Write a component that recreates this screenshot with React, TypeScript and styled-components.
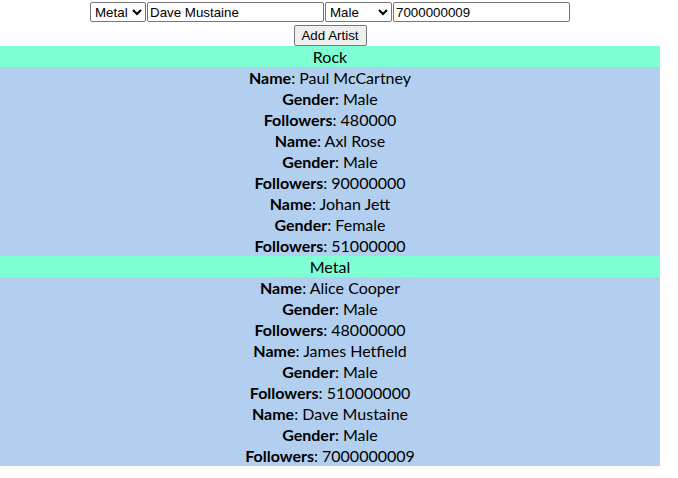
import React, { useState } from "react";
import styled, { createGlobalStyle } from "styled-components";

type Artist = {
  name: string;
  gender: string;
  followers: string;
  genre: string;
};

const GlobalStyle = createGlobalStyle`
  body {
    margin: 0;
    font-family: "Segoe UI", Lato, "Noto Sans", sans-serif;
    background: #ffffff;
  }
`;

const Page = styled.div`
  width: 660px;
  text-align: center;
  color: #000;
`;

const Form = styled.div`
  padding-top: 2px;
  display: flex;
  flex-direction: column;
  align-items: center;
  gap: 3px;
`;

const Controls = styled.div`
  display: flex;
  gap: 1px;
  justify-content: center;
`;

const Select = styled.select<{ $w: number }>`
  width: ${(p) => p.$w}px;
  height: 20px;
  font-family: "Liberation Sans", Arial, sans-serif;
  font-size: 13.33px;
  padding: 0;
  border: 1px solid #767676;
  border-radius: 2px;
  background: #fff;
`;

const TextInput = styled.input`
  width: 177px;
  height: 20px;
  box-sizing: border-box;
  font-family: "Liberation Sans", Arial, sans-serif;
  font-size: 13.33px;
  padding: 1px 2px;
  border: 1px solid #767676;
  border-radius: 2px;
`;

const Button = styled.button`
  height: 21px;
  width: 73px;
  font-family: "Liberation Sans", Arial, sans-serif;
  font-size: 13.33px;
  padding: 0 6px;
  border: 1px solid #767676;
  border-radius: 2px;
  background: #efefef;
`;

const Genre = styled.div`
  background: #7fffd4;
  font-size: 16px;
  line-height: 21px;
`;

const List = styled.div`
  background: #b3cfef;
`;

const Row = styled.div`
  font-size: 16px;
  line-height: 21px;
  & b {
    font-weight: 700;
  }
`;

const initial: Artist[] = [
  { name: "Paul McCartney", gender: "Male", followers: "480000", genre: "Rock" },
  { name: "Axl Rose", gender: "Male", followers: "90000000", genre: "Rock" },
  { name: "Johan Jett", gender: "Female", followers: "51000000", genre: "Rock" },
  { name: "Alice Cooper", gender: "Male", followers: "48000000", genre: "Metal" },
  { name: "James Hetfield", gender: "Male", followers: "510000000", genre: "Metal" },
  { name: "Dave Mustaine", gender: "Male", followers: "7000000009", genre: "Metal" },
];

const App = () => {
  const [artists, setArtists] = useState<Artist[]>(initial);
  const [genre, setGenre] = useState("Metal");
  const [name, setName] = useState("Dave Mustaine");
  const [gender, setGender] = useState("Male");
  const [followers, setFollowers] = useState("7000000009");

  const addArtist = () => {
    setArtists([...artists, { name, gender, followers, genre }]);
  };

  return (
    <Page>
      <GlobalStyle />
      <Form>
        <Controls>
          <Select $w={56} value={genre} onChange={(e) => setGenre(e.target.value)}>
            <option>Rock</option>
            <option>Metal</option>
          </Select>
          <TextInput value={name} onChange={(e) => setName(e.target.value)} />
          <Select $w={67} value={gender} onChange={(e) => setGender(e.target.value)}>
            <option>Male</option>
            <option>Female</option>
          </Select>
          <TextInput value={followers} onChange={(e) => setFollowers(e.target.value)} />
        </Controls>
        <Button onClick={addArtist}>Add Artist</Button>
      </Form>
      {["Rock", "Metal"].map((g) => (
        <div key={g}>
          <Genre>{g}</Genre>
          <List>
            {artists
              .filter((a) => a.genre === g)
              .map((a, i) => (
                <div key={i}>
                  <Row>
                    <b>Name</b>: {a.name}
                  </Row>
                  <Row>
                    <b>Gender</b>: {a.gender}
                  </Row>
                  <Row>
                    <b>Followers</b>: {a.followers}
                  </Row>
                </div>
              ))}
          </List>
        </div>
      ))}
    </Page>
  );
};

export default App;
